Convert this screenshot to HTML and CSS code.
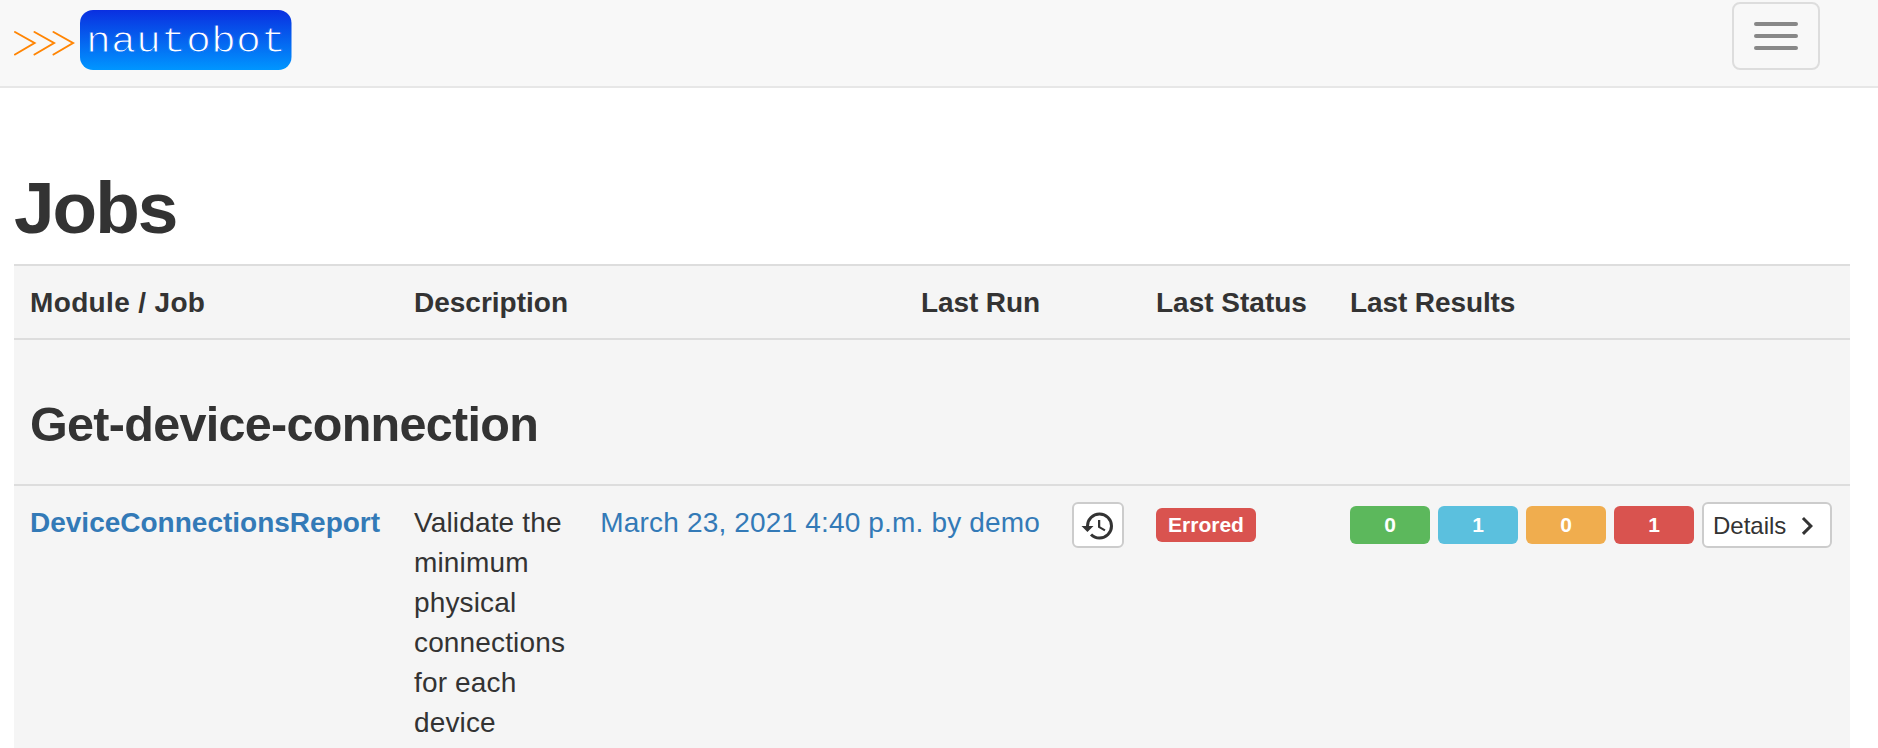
FILE: index.html
```html
<!DOCTYPE html>
<html lang="en">
<head>
<meta charset="utf-8">
<title>Jobs - Nautobot</title>
<link rel="stylesheet" href="styles.css">
</head>
<body>
<nav class="navbar">
  <a class="brand" href="#" aria-label="nautobot">
    <svg width="280" height="64" viewBox="0 0 280 64">
      <defs><linearGradient id="brand-blue" gradientUnits="userSpaceOnUse" x1="0" y1="2" x2="0" y2="62"><stop offset="0" stop-color="#0a2fe0"/><stop offset="1" stop-color="#0096ff"/></linearGradient></defs>
      <path d="M1 24L20.500 35L1 46.500M20.500 24L40 35L20.500 46.500M39.500 24L59 35L39.500 46.500" fill="none" stroke="#ff8504" stroke-width="2" stroke-linecap="round"/>
      <rect x="66" y="2" width="211.500" height="60" rx="13" fill="url(#brand-blue)"/>
      <text class="brand-text" x="72" y="44" textLength="200" lengthAdjust="spacingAndGlyphs" stroke="url(#brand-blue)">nautobot</text>
    </svg>
  </a>
  <button class="toggle" aria-label="Menu"><span class="bar"></span><span class="bar"></span><span class="bar"></span></button>
</nav>
<main class="page">
  <h1 class="title">Jobs</h1>
  <table class="jobs">
    <colgroup><col class="c-job"><col class="c-desc"><col class="c-run"><col class="c-history"><col class="c-status"><col class="c-results"></colgroup>
    <thead>
      <tr><th class="wide">Module / Job</th><th>Description</th><th class="right tight">Last Run</th><th></th><th>Last Status</th><th class="tight">Last Results</th></tr>
    </thead>
    <tbody>
      <tr><th colspan="6"><h3 class="module">Get-device-connection</h3></th></tr>
      <tr>
        <td><a class="link strong" href="#">DeviceConnectionsReport</a></td>
        <td class="desc">Validate the minimum physical connections for each device</td>
        <td class="right"><a class="link date" href="#">March 23, 2021 4:40 p.m. by demo</a></td>
        <td class="controls"><button class="btn history" aria-label="History"><svg class="icon" width="36" height="36" viewBox="0 0 24 24"><path fill="#333" d="M13.500 8H12v5l4.280 2.540.720-1.210-3.500-2.080V8M13 3a9 9 0 0 0-9 9H1l3.960 4.030L9 12H6a7 7 0 0 1 7-7 7 7 0 0 1 7 7 7 7 0 0 1-7 7c-1.930 0-3.680-.790-4.940-2.060l-1.420 1.420A8.896 8.896 0 0 0 13 21a9 9 0 0 0 9-9 9 9 0 0 0-9-9"/></svg></button></td>
        <td class="controls"><span class="label errored">Errored</span></td>
        <td class="controls"><div class="results"><span class="label count success">0</span><span class="label count info">1</span><span class="label count warning">0</span><span class="label count danger">1</span><button class="btn details"><span>Details</span><svg class="icon" width="36" height="36" viewBox="0 0 24 24"><path fill="#333" d="M8.590 16.580 13.170 12 8.590 7.410 10 6l6 6-6 6-1.410-1.420z"/></svg></button></div></td>
      </tr>
    </tbody>
  </table>
</main>
</body>
</html>
```
FILE: styles.css
```css
* { box-sizing: border-box; }
html, body { height: 100%; }
body {
  margin: 0;
  overflow: hidden;
  background: #fff;
  color: #333;
  font: 28px/40px "Liberation Sans", Arial, sans-serif;
}
.navbar {
  display: flex;
  justify-content: space-between;
  align-items: flex-start;
  height: 88px;
  padding: 2px 58px 0 14px;
  background: #f8f8f8;
  border-bottom: 2px solid #e7e7e7;
}
.brand { display: block; margin-top: 6px; }
.brand svg { display: block; }
.brand-text {
  font: 36px "Liberation Mono", monospace;
  fill: #fff;
  stroke-width: 1px;
}
.toggle {
  display: flex;
  flex-direction: column;
  gap: 8px;
  width: 88px;
  height: 68px;
  padding: 18px 20px;
  background: transparent;
  border: 2px solid #ddd;
  border-radius: 8px;
}
.bar { height: 4px; border-radius: 2px; background: #888; }
.page { padding: 80px 28px 0 14px; }
.title {
  margin: 0;
  height: 96px;
  font-size: 73px;
  font-weight: 700;
  line-height: 79px;
  letter-spacing: -2px;
}
.jobs {
  width: 1836px;
  table-layout: fixed;
  border-collapse: separate;
  border-spacing: 0;
  background: #f5f5f5;
}
.c-job { width: 384px; }
.c-desc { width: 186px; }
.c-run { width: 472px; }
.c-history { width: 84px; }
.c-status { width: 194px; }
.c-results { width: 516px; }
.jobs th, .jobs td {
  padding: 17px 16px 15px;
  border-top: 2px solid #ddd;
  text-align: left;
  vertical-align: top;
  white-space: nowrap;
}
.jobs .controls { padding-top: 16px; }
.jobs .right { text-align: right; }
.jobs .desc { white-space: normal; letter-spacing: 0.15px; }
.wide { letter-spacing: 0.35px; }
.tight { letter-spacing: -0.1px; }
.module {
  margin: 41px 0 19px;
  font-size: 48.500px;
  font-weight: 700;
  line-height: 52px;
  letter-spacing: -0.7px;
}
.link { color: #337ab7; text-decoration: none; }
.strong { font-weight: 700; }
.date { letter-spacing: 0.17px; }
.btn {
  display: flex;
  align-items: center;
  justify-content: center;
  height: 46px;
  padding: 2px 0 0;
  background: #fff;
  color: #333;
  border: 2px solid #ccc;
  border-radius: 6px;
  font: 24px/36px "Liberation Sans", Arial, sans-serif;
}
.icon { flex: none; }
.history { width: 52px; }
.label {
  display: block;
  border-radius: 6px;
  color: #fff;
  font-size: 21px;
  font-weight: 700;
  text-align: center;
}
.errored { width: 100px; height: 34px; margin-top: 6px; line-height: 34px; background: #d9534f; }
.results { display: flex; align-items: center; gap: 8px; }
.count { width: 80px; height: 38px; line-height: 38px; }
.success { background: #5cb85c; }
.info { background: #5bc0de; }
.warning { background: #f0ad4e; }
.danger { background: #d9534f; }
.details { width: 130px; padding-left: 9px; gap: 3px; justify-content: flex-start; }
```
